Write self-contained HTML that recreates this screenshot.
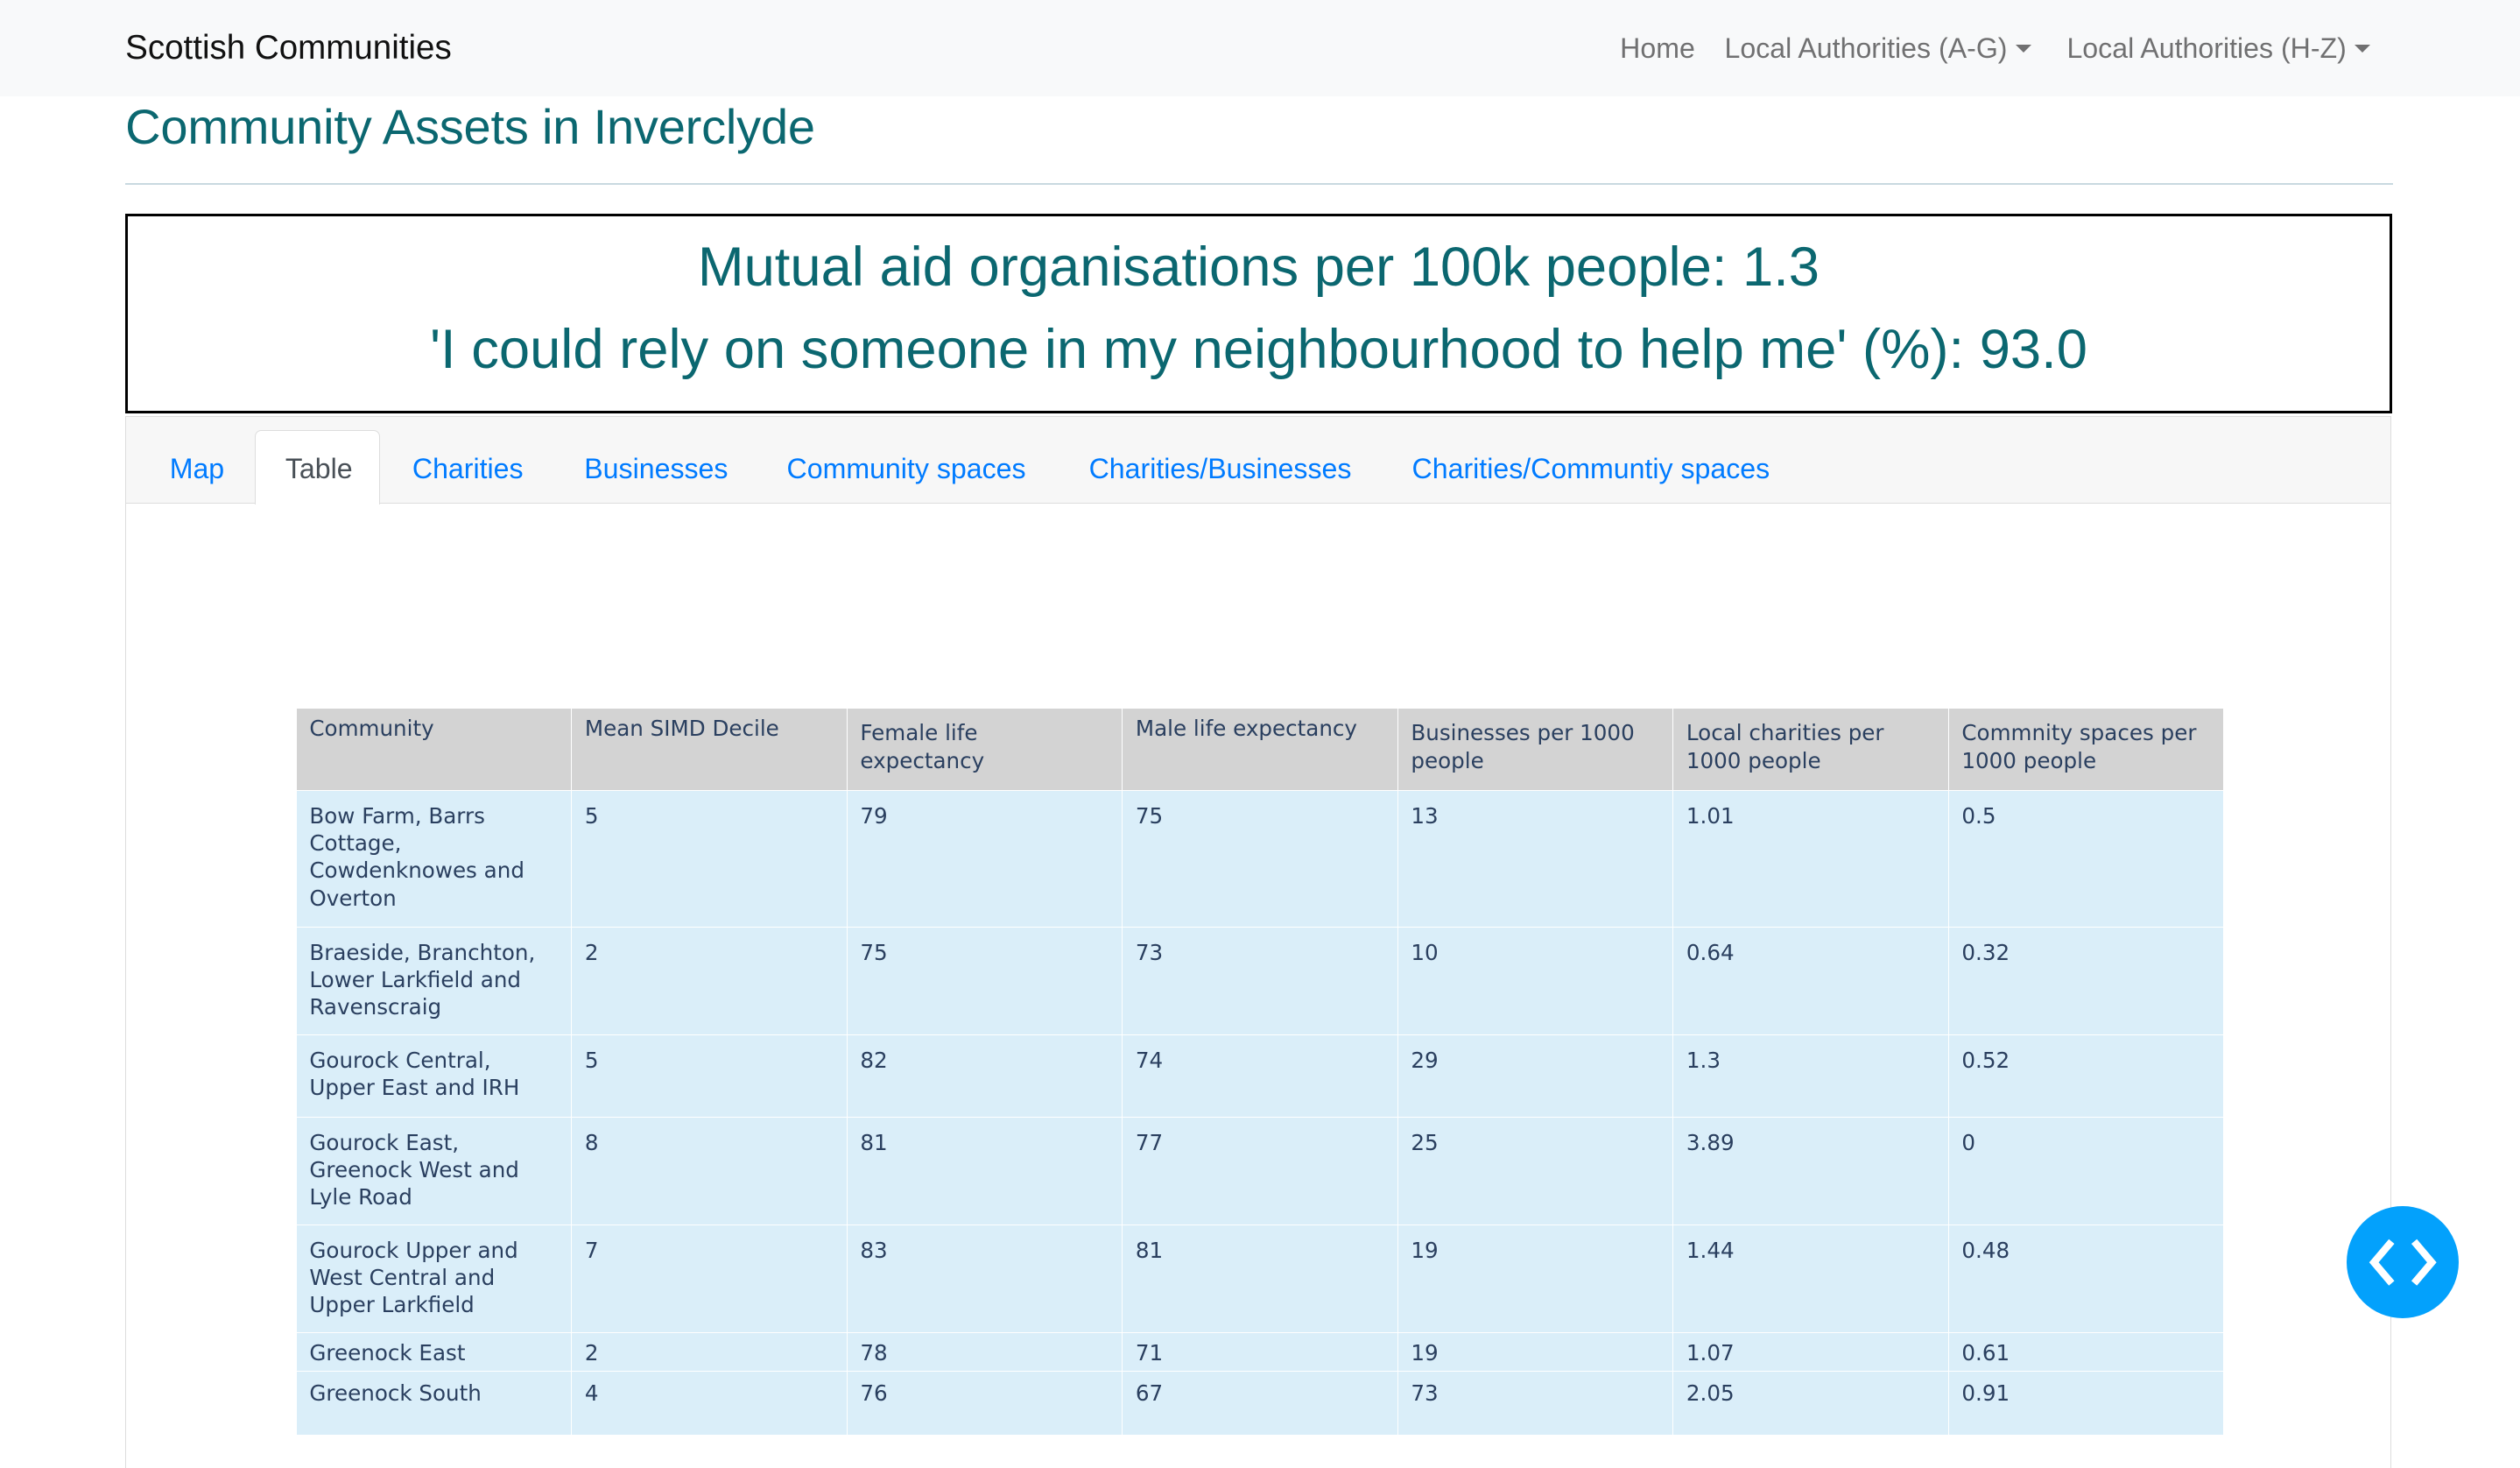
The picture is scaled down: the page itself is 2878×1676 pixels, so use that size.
<!DOCTYPE html>
<html><head><meta charset="utf-8">
<style>
html{zoom:1.8355}
body{margin:0;width:1568px;height:858px;overflow:hidden;background:#fff;font-family:"Liberation Sans",Arial,sans-serif;position:relative}
.nav{position:absolute;left:0;top:0;width:1568px;height:60px;background:#f8f9fa}
.brand{position:absolute;left:78px;top:18px;font-size:21px;color:#111}
.nl{position:absolute;top:20px;font-size:17.5px;color:rgba(0,0,0,.55);white-space:nowrap}
.car{display:inline-block;width:0;height:0;border-left:5px solid transparent;border-right:5px solid transparent;border-top:5px solid rgba(0,0,0,.55);vertical-align:3px;margin-left:5px}
h2{position:absolute;left:78px;top:61px;margin:0;font-size:30.5px;font-weight:normal;color:#0b6770;letter-spacing:-0.1px}
.hr{position:absolute;left:78px;top:114px;width:1411px;height:1px;background:#c9d9e0}
.box{position:absolute;left:78px;top:133px;width:1407px;height:121px;border:2px solid #000;text-align:center;color:#0b6770;font-size:34.5px}
.box div{position:absolute;left:0;right:0}
.tabs{position:absolute;left:78px;top:259px;width:1409px;height:53px;background:#f7f7f7;border:1px solid #ddd;border-bottom:1px solid #ddd}
.tab{position:absolute;top:22px;font-size:17.5px;color:#007bff;white-space:nowrap}
.act{position:absolute;left:80px;top:8px;width:77px;height:46px;background:#fff;border:1px solid #ddd;border-bottom:none;border-radius:4px 4px 0 0}
.pane{position:absolute;left:78px;top:313px;width:1409px;height:600px;border-left:1px solid #ddd;border-right:1px solid #ddd}
table{position:absolute;left:184px;top:440px;width:1200px;border-collapse:collapse;table-layout:fixed;font-family:"DejaVu Sans",Verdana,sans-serif;font-size:13.4px;color:#2a3f5f;line-height:17px}
td{border:1px solid #fff;vertical-align:top;padding:7px 8px 0 8px;background:#daeef9}
tr.h td{background:#d3d3d3;padding-top:4px;height:44px}
tr.h td.t2{padding-top:7px}
.fab{position:absolute;left:1460px;top:750px;width:70px;height:70px;border-radius:50%;background:#03a1fc}
</style></head><body>
<div class="nav">
<div class="brand">Scottish Communities</div>
<div class="nl" style="left:1008px">Home</div>
<div class="nl" style="left:1073px">Local Authorities (A-G)<span class="car"></span></div>
<div class="nl" style="left:1286px">Local Authorities (H-Z)<span class="car"></span></div>
</div>
<h2>Community Assets in Inverclyde</h2>
<div class="hr"></div>
<div class="box">
<div style="top:12px">Mutual aid organisations per 100k people: 1.3</div>
<div style="top:63px">'I could rely on someone in my neighbourhood to help me' (%): 93.0</div>
</div>
<div class="pane"></div>
<div class="tabs">
<div class="act"></div>
<div class="tab" style="left:27px">Map</div>
<div class="tab" style="left:99px;color:#495057">Table</div>
<div class="tab" style="left:178px">Charities</div>
<div class="tab" style="left:285px">Businesses</div>
<div class="tab" style="left:411px">Community spaces</div>
<div class="tab" style="left:599px">Charities/Businesses</div>
<div class="tab" style="left:800px">Charities/Communtiy spaces</div>
</div>
<table>
<tr class="h"><td>Community</td><td>Mean SIMD Decile</td><td class="t2">Female life<br>expectancy</td><td>Male life expectancy</td><td class="t2">Businesses per 1000 people</td><td class="t2">Local charities per 1000 people</td><td class="t2">Commnity spaces per 1000 people</td></tr>
<tr style="height:85px"><td>Bow Farm, Barrs Cottage, Cowdenknowes and Overton</td><td>5</td><td>79</td><td>75</td><td>13</td><td>1.01</td><td>0.5</td></tr>
<tr style="height:67px"><td>Braeside, Branchton, Lower Larkfield and Ravenscraig</td><td>2</td><td>75</td><td>73</td><td>10</td><td>0.64</td><td>0.32</td></tr>
<tr style="height:51px"><td>Gourock Central, Upper East and IRH</td><td>5</td><td>82</td><td>74</td><td>29</td><td>1.3</td><td>0.52</td></tr>
<tr style="height:67px"><td>Gourock East, Greenock West and Lyle Road</td><td>8</td><td>81</td><td>77</td><td>25</td><td>3.89</td><td>0</td></tr>
<tr style="height:67px"><td>Gourock Upper and West Central and Upper Larkfield</td><td>7</td><td>83</td><td>81</td><td>19</td><td>1.44</td><td>0.48</td></tr>
<tr style="height:24px"><td style="padding-top:4px">Greenock East</td><td style="padding-top:4px">2</td><td style="padding-top:4px">78</td><td style="padding-top:4px">71</td><td style="padding-top:4px">19</td><td style="padding-top:4px">1.07</td><td style="padding-top:4px">0.61</td></tr>
<tr style="height:40px"><td style="padding-top:5px">Greenock South</td><td style="padding-top:5px">4</td><td style="padding-top:5px">76</td><td style="padding-top:5px">67</td><td style="padding-top:5px">73</td><td style="padding-top:5px">2.05</td><td style="padding-top:5px">0.91</td></tr>
</table>
<div class="fab"><svg width="70" height="70" viewBox="0 0 70 70"><path d="M28 22 L17 35 L28 48" stroke="#fff" stroke-width="4.5" fill="none"/><path d="M42 22 L53 35 L42 48" stroke="#fff" stroke-width="4.5" fill="none"/></svg></div>
</body></html>
